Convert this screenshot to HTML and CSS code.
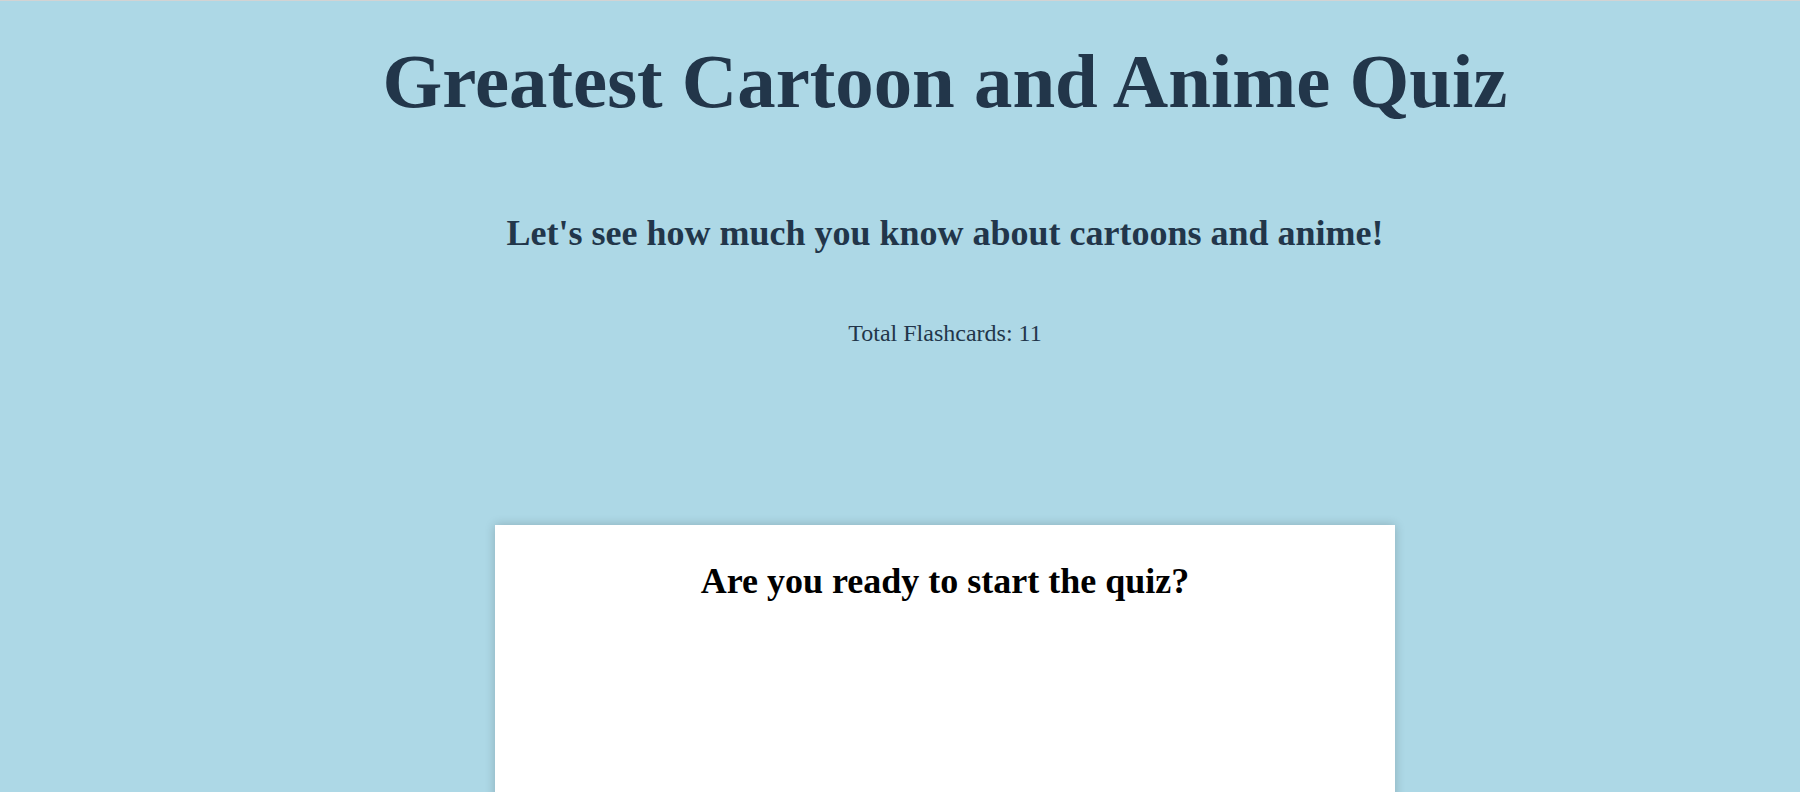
FILE: index.html
```html
<!DOCTYPE html>
<html lang="en">
<head>
<meta charset="utf-8">
<title>Greatest Cartoon and Anime Quiz</title>
<link rel="stylesheet" href="styles.css">
</head>
<body>
<div class="page">
  <header class="header">
    <h1 class="title">Greatest Cartoon and Anime Quiz</h1>
    <h2 class="subtitle">Let's see how much you know about cartoons and anime!</h2>
    <p class="count">Total Flashcards: 11</p>
  </header>
  <main class="card-wrap">
    <section class="card">
      <h2 class="card-question">Are you ready to start the quiz?</h2>
    </section>
  </main>
</div>
</body>
</html>
```
FILE: styles.css
```css
html, body {
  margin: 0;
  padding: 0;
  height: 100%;
  overflow: hidden;
}
body {
  background: #add8e6;
  border-top: 1px solid #d3d3d3;
  font-family: "Liberation Serif", "Times New Roman", serif;
}
.page {
  padding-left: 90px;
  display: flex;
  flex-direction: column;
  align-items: center;
}
.header {
  display: flex;
  flex-direction: column;
  align-items: center;
  color: #22364a;
}
.title {
  margin: 37px 0 0;
  font-size: 76.8px;
  font-weight: bold;
  line-height: 88px;
}
.subtitle {
  margin: 87px 0 0;
  font-size: 36px;
  font-weight: bold;
  line-height: 40px;
}
.count {
  margin: 66px 0 0;
  font-size: 24px;
  line-height: 28px;
}
.card-wrap {
  align-self: stretch;
  display: flex;
  justify-content: center;
  margin-top: 178px;
}
.card {
  width: 900px;
  height: 400px;
  background: #fff;
  box-shadow: 0 0 10px rgba(0, 0, 0, 0.2);
  display: flex;
  flex-direction: column;
  align-items: center;
  box-sizing: border-box;
  padding-top: 36px;
}
.card-question {
  margin: 0;
  font-size: 36px;
  font-weight: bold;
  line-height: 40px;
  color: #000;
}
```
